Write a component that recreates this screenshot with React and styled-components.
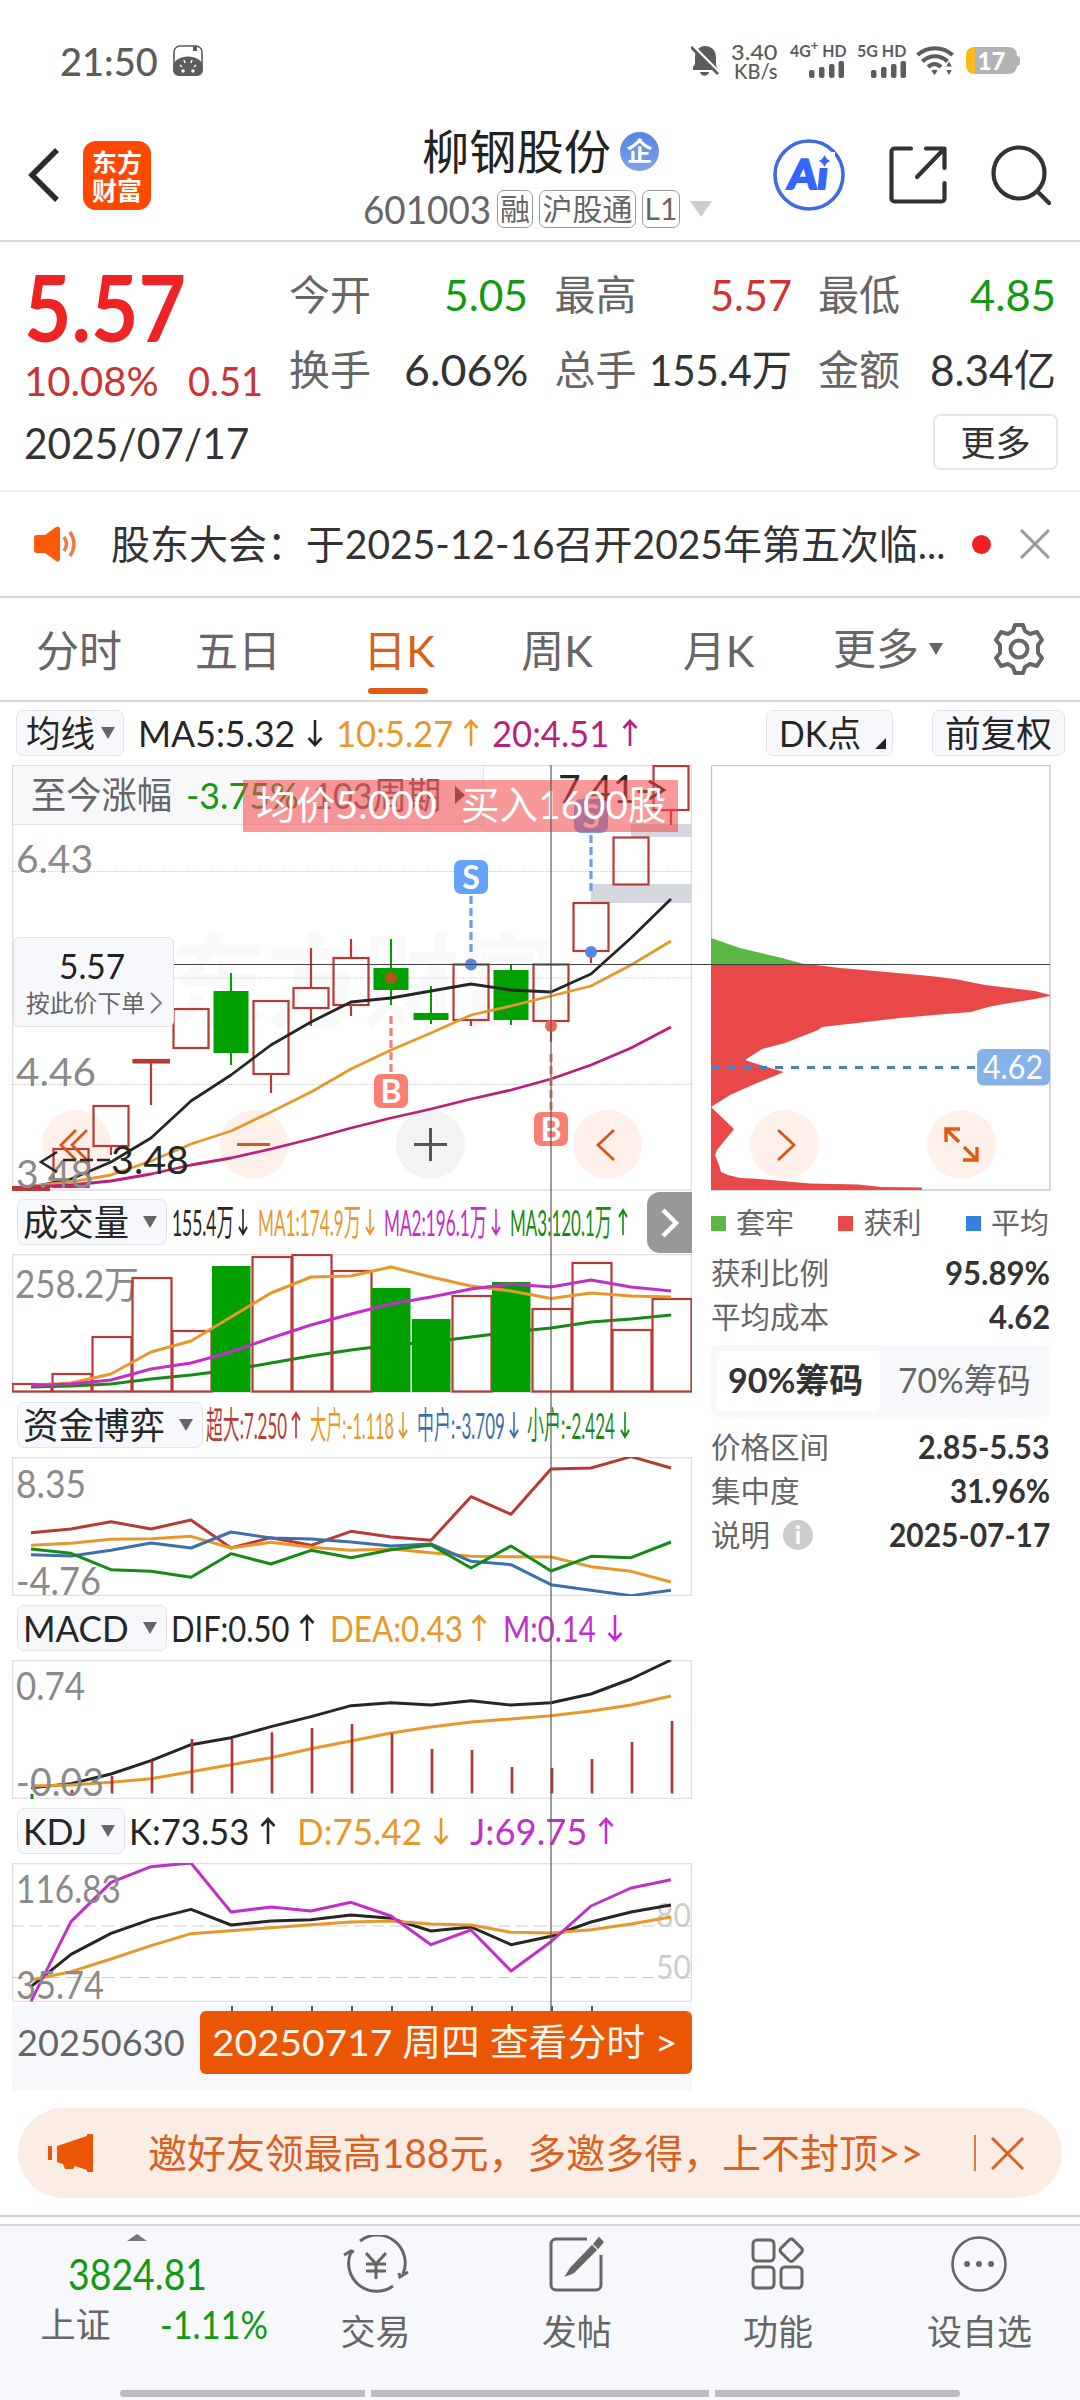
import React, { useLayoutEffect, useRef, useState } from 'react'
import styled, { createGlobalStyle } from 'styled-components'

const GlobalStyle = createGlobalStyle`
  * { box-sizing: border-box; }
  body {
    margin: 0;
    background: #fff;
    font-family: Lato, "Noto Sans CJK SC", sans-serif;
    color: #333;
  }
  svg { display: block; flex: none; }
  svg text { font-family: Lato, "Noto Sans CJK SC", sans-serif; }
`

const Fit = ({ w, children, ...rest }) => {
  const ref = useRef(null)
  const [scale, setScale] = useState(1)
  useLayoutEffect(() => {
    setScale(w / ref.current.offsetWidth)
  }, [w, children])
  return (
    <FitBox $w={w} {...rest}>
      <FitInner ref={ref} style={{ transform: `scaleX(${scale})` }}>{children}</FitInner>
    </FitBox>
  )
}

const Arrow = ({ up, narrow }) => (
  <svg width={narrow ? 10 : 16} height="28" viewBox="0 0 16 28" preserveAspectRatio="none">
    <path
      d={up ? 'M8 27V2M1.5 9L8 2l6.5 7' : 'M8 1v25M1.5 19L8 26l6.5-7'}
      fill="none" stroke="currentColor" strokeWidth="2.6"
    />
  </svg>
)

const STEP = 40
const cx = (i) => 31 + i * STEP
const points = (ys) => ys.map((y, i) => `${cx(i)},${y}`).join(' ')
// the sub charts keep their values on a grid three times finer than the pixels
const fine = (top, ys) => points(ys.map((v) => top + v / 3))

const Line = ({ pts, color, w = 3 }) => (
  <polyline points={pts} fill="none" stroke={color} strokeWidth={w} strokeLinejoin="round" />
)

const Label = ({ x = 16, y, w, size = 39, fill = '#8a8a8a', weight = 400, children }) => (
  <text x={x} y={y} fontSize={size} fill={fill} fontWeight={weight} textLength={w} lengthAdjust="spacingAndGlyphs">
    {children}
  </text>
)

const RED = '#b83a36'
const GREEN = '#00a000'
const INK = '#262626'
const ORANGE = '#e8982a'
const PURPLE = '#c22fc8'

// [body top, body bottom, high, low, falling]
const candles = [
  [1187, 1189, 1187, 1189],
  [1149, 1187, 1149, 1187],
  [1106, 1146, 1106, 1155],
  [1060, 1062, 1060, 1105],
  [1009, 1048, 1009, 1048],
  [991, 1053, 973, 1065, true],
  [1001, 1074, 1001, 1093],
  [988, 1008, 948, 1026],
  [958, 1005, 939, 1016],
  [968, 990, 939, 1005, true],
  [1013, 1020, 986, 1024, true],
  [964.5, 1020, 964.5, 1026],
  [970, 1020, 965, 1025, true],
  [964.5, 1021, 964.5, 1042],
  [903, 951, 903, 963],
  [837.5, 884.5, 837, 884],
  [766, 810, 766, 825],
]
const ma5 = [1187, 1179, 1162, 1138, 1101, 1075, 1045, 1022, 1002, 998, 991, 984, 990, 992, 974, 938, 899]
const ma10 = [1186, 1182, 1175, 1161, 1144, 1131, 1112, 1092, 1069, 1050, 1033, 1015, 1006, 996, 986, 965, 941]
const ma20 = [1187, 1185, 1181, 1174, 1165, 1158, 1149, 1139, 1128, 1118, 1109, 1099, 1090, 1079, 1065, 1048, 1027]

const Candle = ({ i, data }) => {
  const [top, bottom, high, low, falling] = data
  const c = cx(i)
  if (falling) {
    return (
      <g fill={GREEN}>
        <rect x={c - 1} y={high} width="2" height={low - high} />
        <rect x={c - 17.5} y={top} width="35" height={bottom - top} />
      </g>
    )
  }
  return (
    <g stroke={RED} strokeWidth="2.2" fill="none">
      <path d={`M${c} ${high}V${top}M${c} ${bottom}V${low}`} />
      <rect x={c - 17.5} y={top} width="35" height={bottom - top} />
    </g>
  )
}

const Mark = ({ x, y, from, to, dot, letter }) => {
  const buy = letter === 'B'
  const color = buy ? '#fa7f70' : '#66a3fa'
  return (
    <g>
      <path d={`M${x} ${from}V${to}`} stroke={buy ? '#ee8478' : '#69a0e8'} strokeWidth="3.2" strokeDasharray="8 4" />
      <circle cx={x} cy={dot} r="6" fill={buy ? (x < 500 ? '#b5541d' : '#f0665a') : '#5088e8'} />
      <rect x={x - 17} y={y} width="34" height="34" rx="7" fill={color} />
      <text x={x} y={y + 28.5} fontSize="32" fontWeight="700" fill="#fff" textAnchor="middle">{letter}</text>
    </g>
  )
}

const KChart = () => (
  <svg width="680" height="426" viewBox="12 765 680 426">
    <rect x="12.5" y="765.5" width="679" height="424.5" fill="none" stroke="#e0e0e0" strokeWidth="1.6" />
    <text x="170" y="1019" fontSize="102" fontWeight="700" fill="#f9f9f9" textLength="386" lengthAdjust="spacingAndGlyphs">东方财富</text>
    {[871.5, 978, 1084.5].map((y) => (
      <path key={y} d={`M12 ${y}H692`} stroke="#c8c8c8" strokeDasharray="1.5 1.5" />
    ))}
    <rect x="591" y="884" width="101" height="19" fill="#d4d8de" />
    <rect x="631" y="824" width="61" height="13" fill="#d4d8de" />
    {[76.5, 254, 430.5, 607.5].map((x) => (
      <circle key={x} cx={x} cy="1144.5" r="34.5" fill={x === 430.5 ? '#f3f3f3' : '#fff0e9'} />
    ))}
    <rect x="12" y="1186" width="38" height="5" fill={RED} />
    {candles.map((c, i) => <Candle key={i} i={i} data={c} />)}
    <rect x="133" y="1059" width="37" height="4.5" fill={RED} />
    <path d="M76 1130L61 1145l15 15M87 1130l-15 15 15 15M614 1130l-16 15 16 15M237 1144.5h33" fill="none" stroke="#d4581a" strokeWidth="2.8" />
    <path d="M414 1144.5h33M430.5 1128v33" stroke="#555" strokeWidth="3" />
    <Line pts={points(ma5)} color={INK} w={2.8} />
    <Line pts={points(ma10)} color={ORANGE} w={2.8} />
    <Line pts={points(ma20)} color="#bb1f7c" w={2.8} />
    <Label y={873} w={77}>6.43</Label>
    <Label y={1086} w={80}>4.46</Label>
    <Label y={1188} w={77}>3.48</Label>
    <Label x={111} y={1174} w={78} fill={INK}>3.48</Label>
    <path d="M57 1152l-16 10 16 10M63 1160h13M80 1160h13M97 1160h13" fill="none" stroke={INK} strokeWidth="2.6" />
    <Label x={558} y={803} w={92} fill={INK}>7.41-</Label>
    <path d="M649 781l15 9-15 9" fill="none" stroke={INK} strokeWidth="2.8" />
    <Mark x={471} y={860} from={896} to={955} dot={964.5} letter="S" />
    <Mark x={591} y={799} from={835} to={891} dot={952} letter="S" />
    <Mark x={391} y={1074} from={1016} to={1072} dot={978} letter="B" />
    <Mark x={551} y={1112} from={1054} to={1110} dot={1026} letter="B" />
  </svg>
)

const volumes = [1384, 1374, 1337, 1278, 1331, 1266, 1257, 1255, 1271, 1288, 1319, 1296, 1282, 1309, 1263, 1330, 1299]
const vol1 = [1385.5, 1383, 1374, 1352, 1341, 1317, 1293, 1277, 1276, 1267, 1277, 1286, 1291, 1298.5, 1293, 1296, 1297]
const vol2 = [1385.5, 1384, 1380, 1369, 1363, 1352, 1338, 1325, 1314, 1304, 1297, 1289, 1284, 1287, 1280, 1287, 1291]
const vol3 = [1387, 1386, 1384, 1379, 1375, 1370, 1363, 1356, 1350, 1345, 1342, 1337, 1332, 1328, 1322, 1319, 1315]

const SubChart = ({ top, children }) => (
  <svg width="680" height="139" viewBox={`12 ${top} 680 139`}>
    <rect x="12.5" y={top + 0.5} width="679" height="138" fill="none" stroke="#e0e0e0" strokeWidth="1.6" />
    {children}
  </svg>
)

const VolumeChart = () => (
  <SubChart top={1254}>
    <Label x={15} y={1298} w={124} size={38}>258.2万</Label>
    <Line pts={points(vol3)} color="#158a15" />
    {volumes.map((y, i) => (
      candles[i][4]
        ? <rect key={i} x={cx(i) - 19} y={y} width="38.5" height={1392 - y} fill={GREEN} />
        : <rect key={i} x={cx(i) - 18.5} y={y} width="39" height={1391.5 - y} fill="none" stroke={RED} strokeWidth="2.2" />
    ))}
    <Line pts={points(vol1)} color={ORANGE} />
    <Line pts={points(vol2)} color={PURPLE} />
  </SubChart>
)

const fund = {
  [RED]: [278, 267, 245, 267, 240, 324, 293, 316, 274, 291, 301, 170, 223, 87, 84, 50, 84],
  [ORANGE]: [316, 310, 298, 296, 289, 324, 307, 322, 331, 327, 338, 349, 350, 351, 380, 394, 426],
  '#3c6fae': [344, 348, 331, 309, 324, 276, 294, 297, 306, 318, 312, 364, 374, 434, 451, 467, 451],
  '#158a15': [327, 340, 389, 394, 412, 341, 372, 331, 353, 329, 315, 384, 318, 393, 349, 353, 306],
}

const FundChart = () => (
  <SubChart top={1457}>
    <Label y={1498} w={70}>8.35</Label>
    <Label y={1595} w={85}>-4.76</Label>
    {Object.entries(fund).map(([color, ys]) => <Line key={color} pts={fine(1440, ys)} color={color} />)}
  </SubChart>
)

const dif = [1043, 1031, 1002, 962, 914, 893, 860, 830, 797, 788, 795, 782, 795, 788, 762, 717, 660]
const dea = [1038, 1035, 1027, 1016, 995, 974, 953, 926, 903, 879, 861, 846, 837, 827, 813, 795, 768]
const macd = [null, 1050, 1008, 962, 897, 897, 877, 864, 852, 880, 927, 930, 981, 984, 957, 906, 843]

const MacdChart = () => (
  <SubChart top={1660}>
    <Line pts={fine(1440, dif)} color={INK} />
    <Line pts={fine(1440, dea)} color={ORANGE} />
    {macd.map((v, i) => v && (
      <path key={i} d={`M${cx(i) + 1} ${1440 + v / 3}V1793.5`} stroke="#b5302c" strokeWidth="2.6" />
    ))}
    <path d="M32 1794v5" stroke="#158a15" strokeWidth="3" />
    <Label y={1700} w={69}>0.74</Label>
    <Label y={1796} w={88}>-0.03</Label>
  </SubChart>
)

const kdjK = [590, 493, 430, 388, 358, 405, 393, 389, 375, 385, 423, 411, 464, 439, 396, 366, 345]
const kdjD = [570, 545, 507, 467, 431, 422, 413, 404, 396, 393, 402, 405, 427, 429, 419, 402, 381]
const kdjJ = [634, 395, 277, 230, 219, 366, 351, 363, 337, 378, 464, 420, 543, 455, 348, 294, 269]

const KdjChart = () => (
  <SubChart top={1863}>
    <path d="M12 1926H692M12 1977.5H692" stroke="#ccc" strokeDasharray="12 6" />
    <Label x={656} y={1927} w={35} size={32} fill="#ccc">80</Label>
    <Label x={656} y={1979} w={35} size={32} fill="#ccc">50</Label>
    <Line pts={fine(1790, kdjK)} color={INK} />
    <Line pts={fine(1790, kdjD)} color={ORANGE} />
    <Line pts={fine(1790, kdjJ)} color={PURPLE} />
    <Label y={1903} w={105}>116.83</Label>
    <Label y={1999} w={88}>35.74</Label>
  </SubChart>
)

const chipShape = '711,964 804,964 820,965.5 840,968 870,970.5 897,973 930,976 955,979 985,985 1010,988 1035,991 1050,995 1050,996 1035,999 1010,1003 990,1006.5 971,1012 940,1014.5 900,1018 870,1021.5 822,1027 818,1030 785,1043 762,1049 745,1060 757,1064 784,1072 757,1083 730,1095 711,1107 734,1129 717,1150 715,1155 719,1165 721,1172 728,1175 740,1178 752,1178.5 810,1183.5 858,1184.5 881,1187 922,1187.5 922,1190 711,1190'

const ChipChart = () => (
  <svg width="340" height="426" viewBox="711 765 340 426">
    <rect x="711.5" y="765.5" width="338.5" height="424.5" fill="none" stroke="#c8c8c8" strokeWidth="1.4" />
    <polygon points="711,938 740,948 782,958 804,964 711,965" fill="#5bb744" />
    <polygon points={chipShape} fill="#e84848" />
    <path d="M711 1067.5H975" stroke="#4a7fc8" strokeWidth="3" strokeDasharray="8 8" />
    <rect x="977" y="1049" width="73" height="36.5" rx="6" fill="#86b2ea" />
    <Label x={983} y={1079} w={60} size={32} fill="#fff">4.62</Label>
    <circle cx="784.5" cy="1144.5" r="34.5" fill="#fff0e9" />
    <circle cx="961.5" cy="1144.5" r="34.5" fill="#fff0e9" />
    <path d="M778 1130l16 15-16 15" fill="none" stroke="#d4581a" strokeWidth="2.8" />
    <path d="M946 1142v-13h14M947 1130l12 12M977 1147v13h-14M976 1159l-12-12" fill="none" stroke="#e05a14" strokeWidth="3.4" />
  </svg>
)

const Bars = () => (
  <svg width="35" height="17" viewBox="0 0 35 17" fill="#5c5c5c">
    <rect y="9" width="5.5" height="8" rx="2" />
    <rect x="10" y="6" width="5.5" height="11" rx="2" />
    <rect x="20" y="3" width="5.5" height="14" rx="2" />
    <rect x="29.5" width="5.5" height="17" rx="2" />
  </svg>
)

const StatusRow = () => (
  <StatusBar>
    <Fit w={98}>21:50</Fit>
    <svg width="30" height="31" viewBox="0 0 30 31">
      <rect x="1" y="1" width="28" height="29" rx="6" fill="#fff" stroke="#5c5c5c" strokeWidth="1.6" />
      <path d="M0 22c1-14 29-14 30 0v3a6 6 0 0 1-6 6H6a6 6 0 0 1-6-6zM20 1h4v5h-4z" fill="#5c5c5c" />
      <path d="M9 22l-2-2M21 22l2-2M12 18l-1-3M18 18l1-3" stroke="#fff" strokeWidth="1.5" />
      <circle cx="10" cy="26" r="1.8" fill="#fff" />
      <circle cx="20" cy="26" r="1.8" fill="#fff" />
    </svg>
    <StatusRight>
      <svg width="28" height="31" viewBox="0 0 28 31">
        <path d="M14 1c7 0 11 5 11 11v8l2 5H2v-3l2-3v-7C4 6 8 1 14 1zM9 27h9c-1 5-8 5-9 0z" fill="#5c5c5c" />
        <path d="M2 1l27 27" stroke="#fff" strokeWidth="3" />
        <path d="M0 2l27 27" stroke="#5c5c5c" strokeWidth="2.8" />
      </svg>
      <Speed><Fit w={47}>3.40</Fit><Fit w={44}>KB/s</Fit></Speed>
      <Signal><Fit w={57}>4G<sup>+</sup> HD</Fit><SignalBars><Bars /></SignalBars></Signal>
      <Signal><Fit w={49}>5G HD</Fit><Bars /></Signal>
      <svg width="38" height="30" viewBox="0 0 38 30" fill="none" stroke="#5c5c5c" strokeWidth="4.2">
        <path d="M1.5 9c10-9 25-9 35 0M6.500 15.500c7-7 18-7 25 0M12 21c4-4 9-4 13 0" />
        <path d="M18.500 29.500l-4-5q4-3 8 0zM33 14.500l-3.500 6.500h7zM33 30l-3.500-6.500h7z" fill="#5c5c5c" stroke="#fff" strokeWidth="1" />
      </svg>
      <BatteryWrap><Battery>17</Battery><Nub /></BatteryWrap>
    </StatusRight>
  </StatusBar>
)

const Header = () => (
  <HeaderBar>
    <svg width="33" height="56" viewBox="0 0 33 56"><path d="M30 3L5 28l25 25" fill="none" stroke="#2b2b2b" strokeWidth="5.5" /></svg>
    <AppLogo><span>东方</span><span>财富</span></AppLogo>
    <StockName>
      <TitleLine><Fit w={189}>柳钢股份</Fit><Badge>企</Badge></TitleLine>
      <CodeLine>
        <Fit w={128}>601003</Fit>
        <Tag $w={36}>融</Tag>
        <Tag $w={97}>沪股通</Tag>
        <Tag $w={38}>L1</Tag>
        <Caret $w={22} $h={16} $color="#ccc" />
      </CodeLine>
    </StockName>
    <HeaderIcons>
      <svg width="72" height="72" viewBox="0 0 72 72">
        <circle cx="36" cy="36" r="34" fill="none" stroke="#4069e6" strokeWidth="3.6" />
        <g transform="translate(5 0) skewX(-6)">
          <text x="14" y="50" fontSize="41" fontWeight="900" fill="#3565ff" stroke="#3565ff" strokeWidth="2" strokeLinejoin="round" textLength="40" lengthAdjust="spacingAndGlyphs">Ai</text>
        </g>
        <rect x="44" y="13" width="18" height="16" fill="#fff" />
        <path d="M51.500 16q2 5 6 6q-4 1-6 6q-2-5-6-6q4-1 6-6z" fill="#3565ff" />
      </svg>
      <svg width="58" height="58" viewBox="0 0 58 58" fill="none" stroke="#333" strokeWidth="4.2" strokeLinecap="round" strokeLinejoin="round">
        <path d="M22 2.500H5.500a3 3 0 0 0-3 3v47a3 3 0 0 0 3 3h47a3 3 0 0 0 3-3V37M37 2.500h18.500V22M55 3L28 31" />
      </svg>
      <svg width="60" height="60" viewBox="0 0 60 60" fill="none" stroke="#333" strokeWidth="4.2" strokeLinecap="round">
        <circle cx="28" cy="28" r="25.500" /><path d="M47 47l11 11" />
      </svg>
    </HeaderIcons>
  </HeaderBar>
)

const stats = [
  ['今开', '5.05', 84, '#129a12'],
  ['最高', '5.57', 82, '#cc3333'],
  ['最低', '4.85', 86, '#129a12'],
  ['换手', '6.06%', 124, '#333'],
  ['总手', '155.4万', 143, '#333'],
  ['金额', '8.34亿', 126, '#333'],
]

const Quote = () => (
  <QuoteBox>
    <QuoteTop>
      <PriceCol>
        <Price><Fit w={162}>5.57</Fit></Price>
        <Change><Fit w={135}>10.08%</Fit><Fit w={75}>0.51</Fit></Change>
      </PriceCol>
      <StatGrid>
        {stats.map(([name, value, w, color]) => (
          <Stat key={name} $color={color}><span>{name}</span><Fit w={w}>{value}</Fit></Stat>
        ))}
      </StatGrid>
    </QuoteTop>
    <QuoteBottom>
      <Fit w={225}>2025/07/17</Fit>
      <MoreButton>更多</MoreButton>
    </QuoteBottom>
  </QuoteBox>
)

const Notice = () => (
  <NoticeBar>
    <svg width="46" height="36" viewBox="0 0 46 36">
      <path d="M3 9h8L22 1q4-2 4 3v28q0 5-4 3L11 27H3q-3 0-3-3V12q0-3 3-3z" fill="#ff5a0a" />
      <path d="M30 11q5 7 0 14M36 6q8 12 0 24" fill="none" stroke="#f37a3e" strokeWidth="3.500" />
    </svg>
    <NoticeText><Fit w={834}>股东大会：于2025-12-16召开2025年第五次临...</Fit></NoticeText>
    <RedDot />
    <svg width="30" height="30" viewBox="0 0 30 30"><path d="M1 1l28 28M29 1L1 29" stroke="#999" strokeWidth="3" /></svg>
  </NoticeBar>
)

const Tabs = () => (
  <TabBar>
    {[['分时', 158], ['五日', 160], ['日K', 162], ['周K', 154], ['月K', 169]].map(([t, w]) => (
      <Tab key={t} $w={w} $active={t === '日K'}>{t}</Tab>
    ))}
    <MoreTab>更多<Caret $w={15} $h={12} $color="#666" /></MoreTab>
    <svg width="52" height="52" viewBox="0 0 52 52" fill="none" stroke="#666" strokeWidth="4" strokeLinejoin="round">
      <path d="M22 2h8l2 6 5 3 7-2 5 8-4 5v8l4 5-5 8-7-2-5 3-2 6h-8l-2-6-5-3-7 2-5-8 4-5v-8l-4-5 5-8 7 2 5-3z" />
      <circle cx="26" cy="26" r="8.500" />
    </svg>
  </TabBar>
)

const IndicatorRow = () => (
  <MaRow>
    <Picker $w={108} $tight><Fit w={69}>均线</Fit><Caret $w={14} $h={12} $color="#666" /></Picker>
    <MaValues>
      <Value $color={INK} $gap={12}><Fit w={157}>MA5:5.32</Fit><Arrow /></Value>
      <Value $color={ORANGE} $gap={10}><Fit w={117}>10:5.27</Fit><Arrow up /></Value>
      <Value $color="#bb1f7c" $gap={13}><Fit w={117}>20:4.51</Fit><Arrow up /></Value>
    </MaValues>
    <Picker $w={127}><Fit w={82}>DK点</Fit><Corner /></Picker>
    <Picker $w={133} $last><Fit w={107}>前复权</Fit></Picker>
  </MaRow>
)

const SubHeader = ({ name, w, textW, start, values }) => (
  <SubHead>
    <Picker $w={w} $sub><Fit w={textW}>{name}</Fit><Caret $w={15} $h={12} $color="#666" /></Picker>
    <SubValues $start={start}>
      {values.map(([text, tw, color, up, gap, after, narrow]) => (
        <Value key={text} $color={color} $gap={gap} $after={after}>
          <Fit w={tw}>{text}</Fit><Arrow up={up} narrow={narrow} />
        </Value>
      ))}
    </SubValues>
  </SubHead>
)

const BLUE = '#3c6fae'
const DKGREEN = '#158a15'

const Charts = () => (
  <ChartColumn>
    <MainChart>
      <KChart />
      <SinceBar>
        <Fit w={141}>至今涨幅</Fit>
        <Green><Fit w={113}>-3.75%</Fit></Green>
        <Fit w={128}>103周期</Fit>
        <SideCaret />
      </SinceBar>
      <TradeBanner><Fit w={181}>均价5.000</Fit><Fit w={205}>买入1600股</Fit></TradeBanner>
      <OrderBox>
        <OrderPrice><Fit w={66}>5.57</Fit></OrderPrice>
        <OrderHint>
          <Fit w={119}>按此价下单</Fit>
          <svg width="12" height="22" viewBox="0 0 12 22"><path d="M1 1l10 10L1 21" fill="none" stroke="#777" strokeWidth="1.800" /></svg>
        </OrderHint>
      </OrderBox>
    </MainChart>
    <SubHeader
      name="成交量" w={150} textW={106} start={172}
      values={[
        ['155.4万', 62, INK, false, 4, 10, true],
        ['MA1:174.9万', 103, ORANGE, false, 4, 9, true],
        ['MA2:196.1万', 103, PURPLE, false, 4, 9, true],
        ['MA3:120.1万', 102, DKGREEN, true, 6, 0, true],
      ]}
    />
    <NextPage>
      <svg width="20" height="30" viewBox="0 0 20 30"><path d="M3 2l13 13L3 28" fill="none" stroke="#fff" strokeWidth="4.500" /></svg>
    </NextPage>
    <VolumeChart />
    <SubHeader
      name="资金博弈" w={186} textW={142} start={206}
      values={[
        ['超大:7.250', 81, RED, true, 4, 9, true],
        ['大户:-1.118', 84, ORANGE, false, 4, 9, true],
        ['中户:-3.709', 88, BLUE, false, 4, 8, true],
        ['小户:-2.424', 88, DKGREEN, false, 5, 0, true],
      ]}
    />
    <FundChart />
    <SubHeader
      name="MACD" w={150} textW={106} start={171}
      values={[
        ['DIF:0.50', 119, INK, true, 9, 15],
        ['DEA:0.43', 133, ORANGE, true, 8, 16],
        ['M:0.14', 93, PURPLE, false, 11, 0],
      ]}
    />
    <MacdChart />
    <SubHeader
      name="KDJ" w={108} textW={64} start={129}
      values={[
        ['K:73.53', 120, INK, true, 11, 21],
        ['D:75.42', 125, ORANGE, false, 11, 21],
        ['J:69.75', 117, PURPLE, true, 11, 0],
      ]}
    />
    <KdjChart />
    <DateStrip>
      <Fit w={168}>20250630</Fit>
      <Ticks width="480" height="5" viewBox="192 0 480 5">
        {[5, 6, 7, 8, 9, 10, 11, 12, 13, 14].map((i) => (
          <path key={i} d={`M${cx(i) + 1} 0V5`} stroke="#555" strokeWidth="2" />
        ))}
      </Ticks>
      <DateButton><Fit w={466}>20250717 周四 查看分时 &gt;</Fit></DateButton>
    </DateStrip>
    <CrossV />
  </ChartColumn>
)

const Chips = () => (
  <ChipColumn>
    <ChipChart />
    <Legend>
      <LegendItem $color="#5bb744">套牢</LegendItem>
      <LegendItem $color="#e84848">获利</LegendItem>
      <LegendItem $color="#3480e0">平均</LegendItem>
    </Legend>
    <ChipRow><span>获利比例</span><b><Fit w={105}>95.89%</Fit></b></ChipRow>
    <ChipRow><span>平均成本</span><b><Fit w={61}>4.62</Fit></b></ChipRow>
    <Segment>
      <SegmentItem $on><Fit w={135}>90%筹码</Fit></SegmentItem>
      <SegmentItem><Fit w={133}>70%筹码</Fit></SegmentItem>
    </Segment>
    <ChipRow><span>价格区间</span><b><Fit w={132}>2.85-5.53</Fit></b></ChipRow>
    <ChipRow><span>集中度</span><b><Fit w={100}>31.96%</Fit></b></ChipRow>
    <ChipRow><span>说明<Info>i</Info></span><b><Fit w={161}>2025-07-17</Fit></b></ChipRow>
  </ChipColumn>
)

const Promo = () => (
  <PromoBar>
    <svg width="46" height="40" viewBox="0 0 46 40" fill="#ea5604">
      <path d="M0 13h4v14H0zM9 13L39 3V1h6v38h-6v-2l-12-4-2 3h-8l-2-5-6-2z" />
    </svg>
    <PromoText><Fit w={775}>邀好友领最高188元，多邀多得，上不封顶&gt;&gt;</Fit></PromoText>
    <PromoLine />
    <svg width="33" height="33" viewBox="0 0 33 33"><path d="M1 1l31 31M32 1L1 32" stroke="#d9601f" strokeWidth="3" /></svg>
  </PromoBar>
)

const navItems = [
  ['交易', (
    <svg key="a" width="66" height="58" viewBox="0 0 66 58" fill="none" stroke="#666" strokeWidth="3">
      <path d="M17 6a28 28 0 0 1 43 33M50 51A28 28 0 0 1 8 17M1 20l7-4 3 1M65 37l-8 5-1-4M23 18l10 11 10-11M33 29v15M23 29h20M23 36h20" />
    </svg>
  )],
  ['发帖', (
    <svg key="b" width="55" height="56" viewBox="0 0 55 56" fill="none" stroke="#666" strokeWidth="3">
      <path d="M38 3H7a5 5 0 0 0-5 5v41a5 5 0 0 0 5 5h40a5 5 0 0 0 5-5V19" />
      <path d="M43 11L22 33l-3 5 5-2 22-22zM46 8l4-5 3 3-4 5z" fill="#666" />
    </svg>
  )],
  ['功能', (
    <svg key="c" width="54" height="54" viewBox="0 0 54 54" fill="none" stroke="#666" strokeWidth="3">
      <rect x="2" y="3" width="21" height="21" rx="4" />
      <rect x="2" y="30" width="21" height="21" rx="4" />
      <rect x="30" y="30" width="21" height="21" rx="4" />
      <rect x="31.500" y="4.500" width="17.500" height="17.500" rx="3" transform="rotate(45 40.250 13.250)" />
    </svg>
  )],
  ['设自选', (
    <svg key="d" width="56" height="58" viewBox="0 0 56 58">
      <circle cx="28" cy="29" r="26.500" fill="none" stroke="#666" strokeWidth="2.600" />
      <circle cx="16" cy="29" r="3" fill="#666" /><circle cx="28" cy="29" r="3" fill="#666" /><circle cx="40" cy="29" r="3" fill="#666" />
    </svg>
  )],
]

const BottomNav = () => (
  <NavBar>
    <NavRow>
      <IndexBox>
        <UpCaret />
        <IndexValue><Fit w={139}>3824.81</Fit></IndexValue>
        <IndexLine><span>上证</span><Green><Fit w={108}>-1.11%</Fit></Green></IndexLine>
      </IndexBox>
      {navItems.map(([name, icon]) => (
        <NavItem key={name}>{icon}<span>{name}</span></NavItem>
      ))}
    </NavRow>
    <HomeBar><HomePart $w={245} $side="left" /><HomePart $w={338} /><HomePart $w={245} $side="right" /></HomeBar>
  </NavBar>
)

const App = () => (
  <Page>
    <GlobalStyle />
    <StatusRow />
    <Header />
    <Quote />
    <Notice />
    <Tabs />
    <IndicatorRow />
    <Body>
      <Charts />
      <Chips />
      <CrossH />
    </Body>
    <Promo />
    <BottomNav />
  </Page>
)

export default App

const Page = styled.div`
  width: 1080px;
  height: 2400px;
  display: flex;
  flex-direction: column;
  background: #fff;
  overflow: hidden;
`

const FitBox = styled.span`
  display: inline-block;
  flex: none;
  width: ${(p) => p.$w}px;
  white-space: nowrap;
`

const FitInner = styled.span`
  display: inline-block;
  white-space: pre;
  transform-origin: left center;
`

const StatusBar = styled.div`
  height: 121px;
  padding: 0 60px 0 60px;
  display: flex;
  align-items: center;
  gap: 15px;
  color: #5c5c5c;
  font-size: 38px;
  font-weight: 500;
  line-height: 44px;
`

const StatusRight = styled.div`
  margin-left: auto;
  display: flex;
  align-items: center;
  gap: 12px;
`

const Speed = styled.div`
  display: flex;
  flex-direction: column;
  align-items: flex-end;
  font-size: 21px;
  line-height: 19px;
`

const Signal = styled.div`
  margin-right: -2px;
  display: flex;
  flex-direction: column;
  align-items: flex-end;
  gap: 3px;
  font-size: 17px;
  font-weight: 700;
  line-height: 15px;

  sup {
    font-size: 14px;
    line-height: 0;
  }
`

const SignalBars = styled.div`
  margin-right: 3px;
`

const BatteryWrap = styled.div`
  display: flex;
  align-items: center;
`

const Battery = styled.div`
  width: 51px;
  height: 27px;
  border-radius: 8px;
  background: linear-gradient(90deg, #fbb91c 9px, #b3b3b3 9px);
  color: #fff;
  font-size: 24px;
  font-weight: 900;
  line-height: 27px;
  text-align: center;
`

const Nub = styled.i`
  width: 3px;
  height: 10px;
  border-radius: 0 3px 3px 0;
  background: #b3b3b3;
`

const HeaderBar = styled.div`
  height: 121px;
  border-bottom: 2px solid #d8d8d8;
  display: flex;
  align-items: flex-start;
  padding: 0 29px 0 27px;

  > svg {
    margin-top: 26px;
  }
`

const AppLogo = styled.div`
  width: 68px;
  height: 69px;
  margin: 20px 0 0 23px;
  padding-top: 7px;
  border-radius: 13px;
  background: #ff4800;
  color: #fff;
  display: flex;
  flex-direction: column;
  align-items: center;
  font-size: 25px;
  font-weight: 700;
  line-height: 28px;
`

const StockName = styled.div`
  margin-left: 212px;
  width: 350px;
`

const TitleLine = styled.div`
  margin-left: 59px;
  height: 60px;
  display: flex;
  align-items: center;
  gap: 9px;
  color: #222;
  font-size: 47px;
  line-height: 60px;
`

const Badge = styled.span`
  width: 39px;
  height: 39px;
  border-radius: 50%;
  background: linear-gradient(#5485e6, #7aa3ea);
  color: #fff;
  font-size: 26px;
  font-weight: 700;
  line-height: 38px;
  text-align: center;
`

const CodeLine = styled.div`
  height: 56px;
  display: flex;
  align-items: center;
  gap: 6px;
  color: #666;
  font-size: 38px;
  line-height: 44px;
`

const Tag = styled.span`
  width: ${(p) => p.$w}px;
  height: 38px;
  border: 1.5px solid #999;
  border-radius: 7px;
  font-size: 30px;
  line-height: 34px;
  text-align: center;
  white-space: nowrap;
`

const Caret = styled.i`
  flex: none;
  width: 0;
  height: 0;
  margin-left: 4px;
  border: ${(p) => p.$w / 2}px solid transparent;
  border-top: ${(p) => p.$h}px solid ${(p) => p.$color};
  border-bottom: 0;
`

const HeaderIcons = styled.div`
  margin-left: auto;
  margin-top: 18px;
  display: flex;
  align-items: center;
  gap: 44px;
`

const QuoteBox = styled.div`
  height: 250px;
  padding: 0 24px;
  border-bottom: 2px solid #eeeeee;
`

const QuoteTop = styled.div`
  display: flex;
  height: 160px;
`

const PriceCol = styled.div`
  width: 265px;
`

const Price = styled.div`
  height: 110px;
  color: #ee2424;
  font-size: 91px;
  font-weight: 700;
  line-height: 130px;
`

const Change = styled.div`
  display: flex;
  gap: 29px;
  color: #cc3333;
  font-size: 41px;
  line-height: 58px;
`

const StatGrid = styled.div`
  flex: 1;
  display: grid;
  grid-template-columns: 239px 237px 238px;
  grid-template-rows: 75px 75px;
  column-gap: 26.5px;
  padding-top: 15px;
`

const Stat = styled.div`
  display: flex;
  justify-content: space-between;
  align-items: center;
  color: ${(p) => p.$color};
  font-size: 43px;
  line-height: 50px;

  > span:first-child {
    color: #666;
    font-size: 41px;
    white-space: nowrap;
  }
`

const QuoteBottom = styled.div`
  height: 80px;
  display: flex;
  justify-content: space-between;
  align-items: center;
  padding-top: 2px;
  font-size: 43px;
  line-height: 50px;
`

const MoreButton = styled.button`
  width: 125px;
  height: 56px;
  margin: 0 -2px 3px 0;
  padding: 0;
  border: 2px solid #e6e6e6;
  border-radius: 7px;
  background: #fff;
  color: #333;
  font: inherit;
  font-size: 35px;
  line-height: 50px;
`

const NoticeBar = styled.div`
  height: 106px;
  border-bottom: 2px solid #d8d8d8;
  padding: 0 30px 0 34px;
  display: flex;
  align-items: center;
`

const NoticeText = styled.div`
  margin-left: 31px;
  width: 861px;
  font-size: 40px;
  line-height: 50px;
`

const RedDot = styled.i`
  width: 19px;
  height: 19px;
  margin-right: 29px;
  border-radius: 50%;
  background: #f02222;
`

const TabBar = styled.div`
  height: 104px;
  border-bottom: 2px solid #d8d8d8;
  display: flex;
  align-items: center;
  font-size: 43px;
  line-height: 60px;
  color: #666;
`

const Tab = styled.div`
  width: ${(p) => p.$w}px;
  height: 100px;
  line-height: 104px;
  text-align: center;
  position: relative;
  color: ${(p) => (p.$active ? '#d9601a' : '#666')};

  &::after {
    content: "";
    display: ${(p) => (p.$active ? 'block' : 'none')};
    position: absolute;
    left: 50%;
    bottom: 5px;
    width: 60px;
    height: 6px;
    margin-left: -31px;
    border-radius: 3px;
    background: #e05a12;
  }
`

const MoreTab = styled.div`
  width: 160px;
  margin-left: 30px;
  display: flex;
  align-items: center;
  gap: 6px;
`

const MaRow = styled.div`
  height: 63px;
  padding: 8px 15px 0 16px;
  display: flex;
  align-items: flex-start;
  font-size: 37px;
`

const Picker = styled.div`
  flex: none;
  width: ${(p) => p.$w}px;
  height: 46px;
  margin-left: ${(p) => (p.$last ? 39 : 0)}px;
  padding: 0 ${(p) => (p.$sub ? 9 : p.$tight ? 8 : 6)}px 0 ${(p) => (p.$sub ? 5 : p.$tight ? 9 : 12)}px;
  border: 1.5px solid #e2e4e8;
  border-radius: 7px;
  background: #f7f8fb;
  color: ${INK};
  display: flex;
  align-items: center;
  justify-content: space-between;
  font-size: 36px;
  line-height: 44px;
`

const Corner = styled.i`
  align-self: flex-end;
  margin-bottom: 6px;
  border-left: 11px solid transparent;
  border-bottom: 11px solid #222;
`

const MaValues = styled.div`
  width: 628px;
  margin-left: 14px;
  display: flex;
  gap: 13px;
`

const Value = styled.div`
  display: flex;
  align-items: center;
  gap: ${(p) => p.$gap}px;
  margin-right: ${(p) => p.$after || 0}px;
  color: ${(p) => p.$color};
  line-height: 46px;
`

const Body = styled.div`
  position: relative;
  height: 1325px;
  padding-left: 12px;
  display: flex;
  align-items: flex-start;
  gap: 19px;
`

const ChartColumn = styled.div`
  position: relative;
  width: 680px;
`

const MainChart = styled.div`
  position: relative;
  height: 425px;
`

const SinceBar = styled.div`
  position: absolute;
  left: 1px;
  top: 1px;
  width: 471px;
  height: 59px;
  padding-left: 18px;
  border-right: 1.5px solid #e2e4e8;
  border-bottom: 1.5px solid #e2e4e8;
  background: #f8f8fbee;
  display: flex;
  align-items: center;
  gap: 14px;
  color: #666;
  font-size: 37px;
  line-height: 56px;
`

const Green = styled.span`
  color: #129a12;
`

const SideCaret = styled.i`
  border: 9px solid transparent;
  border-left: 10px solid #444;
  border-right: 0;
`

const TradeBanner = styled.div`
  position: absolute;
  left: 231px;
  top: 15px;
  width: 435px;
  height: 52px;
  padding-left: 13px;
  background: rgba(242, 72, 72, 0.56);
  display: flex;
  gap: 24px;
  color: #fff;
  font-size: 39px;
  line-height: 49px;
`

const OrderBox = styled.div`
  position: absolute;
  left: 1px;
  top: 172px;
  width: 161px;
  height: 90px;
  border: 1.5px solid #e0e2e6;
  border-radius: 6px;
  background: #f7f8fb;
  display: flex;
  flex-direction: column;
  align-items: center;
`

const OrderPrice = styled.div`
  padding-top: 4px;
  margin-right: 4px;
  color: #222;
  font-size: 35px;
  line-height: 46px;
`

const OrderHint = styled.div`
  margin-top: -1px;
  display: flex;
  align-items: center;
  gap: 5px;
  color: #666;
  font-size: 24px;
  line-height: 32px;
`

const SubHead = styled.div`
  height: 64px;
  padding: 9px 0 0 5px;
  display: flex;
  font-size: 37px;
`

const SubValues = styled.div`
  display: flex;
  height: 46px;
  margin-left: auto;
  width: ${(p) => 692 - p.$start}px;
`

const NextPage = styled.div`
  position: absolute;
  right: 0;
  top: 427px;
  width: 45px;
  height: 61px;
  border-radius: 13px 0 0 13px;
  background: #989898;
  display: flex;
  align-items: center;
  justify-content: center;
`

const DateStrip = styled.div`
  position: relative;
  height: 84px;
  margin-top: 4px;
  padding: 5px 0 0 5px;
  background: #f7f8fb;
  display: flex;
  justify-content: space-between;
  color: #666;
  font-size: 37px;
  line-height: 62px;
`

const Ticks = styled.svg`
  position: absolute;
  right: 20px;
  top: 0;
`

const DateButton = styled.div`
  width: 492px;
  height: 63px;
  padding-left: 12px;
  border-radius: 6px;
  background: #ea5604;
  color: #fff6ee;
`

const CrossV = styled.i`
  position: absolute;
  left: 538px;
  top: 0;
  width: 2px;
  height: 1246px;
  background: rgba(90, 90, 90, 0.6);
`

const CrossH = styled.i`
  position: absolute;
  left: 174px;
  top: 199px;
  width: 876px;
  height: 1px;
  background: #444;
`

const ChipColumn = styled.div`
  width: 339px;
`

const Legend = styled.div`
  height: 60px;
  display: flex;
  align-items: center;
  justify-content: space-between;
  padding: 4px 1px 0 0;
`

const LegendItem = styled.span`
  display: flex;
  align-items: center;
  gap: 10px;
  color: #666;
  font-size: 29px;
  line-height: 40px;

  &::before {
    content: "";
    width: 15px;
    height: 15px;
    background: ${(p) => p.$color};
  }
`

const ChipRow = styled.div`
  height: 44px;
  display: flex;
  align-items: center;
  justify-content: space-between;
  color: #666;
  font-size: 29.5px;
  line-height: 38px;

  > span {
    display: flex;
    align-items: center;
  }
  > b {
    color: #333;
    font-size: 32px;
    font-weight: 700;
  }
`

const Segment = styled.div`
  height: 72px;
  margin: 6px 0 8px;
  padding: 6px;
  border-radius: 7px;
  background: #f7f8fb;
  display: flex;
`

const SegmentItem = styled.div`
  width: 163px;
  height: 60px;
  padding-left: ${(p) => (p.$on ? 11 : 18)}px;
  border-radius: 6px;
  background: ${(p) => (p.$on ? '#fff' : 'transparent')};
  color: ${(p) => (p.$on ? '#333' : '#666')};
  font-size: 34px;
  font-weight: ${(p) => (p.$on ? 700 : 400)};
  line-height: 58px;
`

const Info = styled.i`
  width: 30px;
  height: 30px;
  margin-left: 13px;
  border-radius: 50%;
  background: #ccc;
  color: #fff;
  font-size: 25px;
  font-style: normal;
  font-weight: 900;
  line-height: 29px;
  text-align: center;
`

const PromoBar = styled.div`
  flex: none;
  height: 90px;
  margin: 18px 18px 17px;
  padding: 0 38px 0 30px;
  border-radius: 45px;
  background: #fcede4;
  display: flex;
  align-items: center;
`

const PromoText = styled.div`
  width: 827px;
  margin-left: 54px;
  color: #d9601f;
  font-size: 40px;
  line-height: 60px;
`

const PromoLine = styled.i`
  width: 2px;
  height: 36px;
  margin-right: 15px;
  background: #df7a45;
`

const NavBar = styled.div`
  flex: 1;
  border-top: 2px solid #d0d0d0;
  display: flex;
  flex-direction: column;

  &::before {
    content: "";
    height: 7px;
    background: #fff;
  }
`

const NavRow = styled.div`
  flex: 1;
  border-top: 2px solid #d3d5d8;
  background: #f7f8fb;
  display: flex;
`

const IndexBox = styled.div`
  width: 275px;
  padding-top: 8px;
  display: flex;
  flex-direction: column;
  align-items: center;
`

const UpCaret = styled.i`
  border: 10.5px solid transparent;
  border-bottom: 7px solid #777;
  border-top: 0;
`

const IndexValue = styled.div`
  margin-top: 9px;
  color: #129a12;
  font-size: 42px;
  line-height: 48px;
`

const IndexLine = styled.div`
  width: 228px;
  margin-left: 34px;
  margin-top: 6px;
  display: flex;
  align-items: center;
  justify-content: space-between;
  color: #666;
  font-size: 35px;
  line-height: 40px;

  ${Green} {
    font-size: 39px;
  }
`

const NavItem = styled.div`
  width: 201.3px;
  padding-top: 9px;
  display: flex;
  flex-direction: column;
  align-items: center;
  color: #666;
  font-size: 35px;
  line-height: 40px;

  svg {
    height: 58px;
  }
  span {
    margin-top: 18px;
  }
`

const HomeBar = styled.div`
  height: 10px;
  background: #f7f8fb;
  display: flex;
  justify-content: center;
  gap: 6px;
`

const HomePart = styled.i`
  width: ${(p) => p.$w}px;
  height: 7px;
  background: #bbbcbe;
  border-radius: ${(p) => (p.$side === 'left' ? '4px 0 0 4px' : p.$side === 'right' ? '0 4px 4px 0' : 0)};
`
